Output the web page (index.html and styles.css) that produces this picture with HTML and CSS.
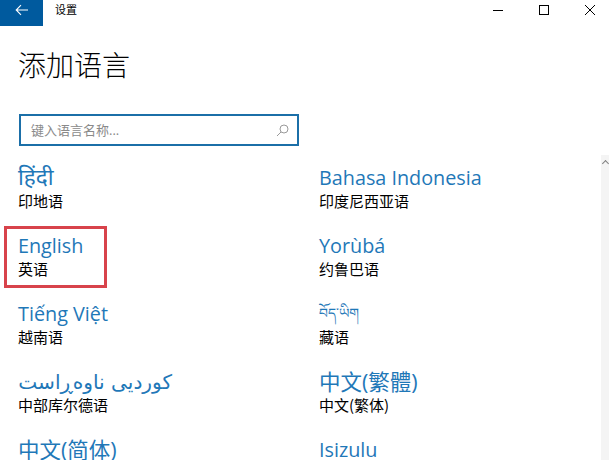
FILE: index.html
```html
<!DOCTYPE html>
<html lang="zh-CN">
<head>
<meta charset="utf-8">
<title>设置</title>
<link rel="stylesheet" href="styles.css">
</head>
<body>
<div class="window">
  <header class="titlebar">
    <div class="titlebar-left">
      <button class="back" aria-label="返回">
        <svg width="14" height="12" viewBox="0 0 14 12"><path d="M13 6H1.5M6 1.2 1.2 6 6 10.8" fill="none" stroke="#fff" stroke-width="1.1"/></svg>
      </button>
      <span class="app-title">设置</span>
    </div>
    <div class="controls">
      <svg width="10" height="10" viewBox="0 0 10 10"><path d="M0 5.5H10" stroke="#000" stroke-width="1"/></svg>
      <svg width="10" height="10" viewBox="0 0 10 10"><rect x=".5" y=".5" width="9" height="9" fill="none" stroke="#000"/></svg>
      <svg width="10" height="10" viewBox="0 0 10 10"><path d="M0 0 10 10M10 0 0 10" stroke="#000" stroke-width="1"/></svg>
    </div>
  </header>
  <main class="content">
    <h1 class="heading">添加语言</h1>
    <div class="search">
      <span class="placeholder">键入语言名称...</span>
      <svg class="search-icon" width="13" height="13" viewBox="0 0 13 13"><circle cx="8" cy="5" r="4" fill="none" stroke="#9a9a9a"/><path d="M5 8 1 12" stroke="#9a9a9a"/></svg>
    </div>
    <div class="languages">
      <div class="lang"><div class="native hindi">हिंदी</div><div class="sub">印地语</div></div>
      <div class="lang"><div class="native">Bahasa Indonesia</div><div class="sub">印度尼西亚语</div></div>
      <div class="lang selected"><div class="native">English</div><div class="sub">英语</div></div>
      <div class="lang"><div class="native">Yorùbá</div><div class="sub">约鲁巴语</div></div>
      <div class="lang"><div class="native">Tiếng Việt</div><div class="sub">越南语</div></div>
      <div class="lang"><div class="native tibetan">བོད་ཡིག</div><div class="sub">藏语</div></div>
      <div class="lang"><div class="native kurdish" dir="rtl">کوردیی ناوەڕاست</div><div class="sub">中部库尔德语</div></div>
      <div class="lang"><div class="native cjk">中文(繁體)</div><div class="sub">中文(繁体)</div></div>
      <div class="lang"><div class="native cjk">中文(简体)</div></div>
      <div class="lang"><div class="native">Isizulu</div></div>
    </div>
  </main>
  <div class="scrollbar"><span class="arrow"></span></div>
</div>
</body>
</html>
```
FILE: styles.css
```css
*, *::after { box-sizing: border-box; }
html, body { margin: 0; height: 100%; overflow: hidden; background: #fff; }
body { font-family: "Open Sans", "Noto Sans CJK SC", sans-serif; color: #000; }
.window { position: relative; width: 609px; height: 460px; overflow: hidden; }
.titlebar { display: flex; justify-content: space-between; height: 26px; }
.titlebar-left { display: flex; align-items: flex-start; }
.back { display: flex; align-items: center; justify-content: center; width: 43px; height: 26px; padding: 0 0 6px; border: 0; background: #005a9e; }
.app-title { margin-left: 12px; font: 11px/18px "Noto Sans CJK SC", sans-serif; }
.controls { display: flex; gap: 36px; padding: 5px 14px 0 0; align-items: flex-start; }
.content { padding: 0 0 0 18px; }
.heading { margin: 15px 0 0; font: 300 28px/46px "Noto Sans CJK SC", sans-serif; }
.search { display: flex; align-items: center; justify-content: space-between; width: 280px; height: 32px; margin: 27px 0 0 1px; padding: 0 8px 0 10px; border: 2px solid #1b6fa8; }
.placeholder { font: 13px/20px "Open Sans", "Noto Sans CJK SC", sans-serif; color: #8a8a8a; }
.search-icon { flex: none; }
.languages { display: grid; grid-template-columns: 301px 1fr; grid-auto-rows: 68px; margin-top: 18px; }
.lang { position: relative; }
.native { height: 28px; font: 400 19.8px/28px "Open Sans", "Noto Sans CJK SC", sans-serif; color: #1f78b8; white-space: nowrap; }
.hindi { margin-top: 2px; height: 26px; font-family: "Noto Sans Devanagari", "Noto Sans", "DejaVu Sans", sans-serif; font-size: 22.5px; }
.tibetan { margin-top: 3px; height: 25px; font-family: "Noto Serif Tibetan", "DejaVu Sans", sans-serif; font-size: 14px; }
.kurdish { width: 154px; font-family: "DejaVu Sans", sans-serif; font-size: 20.1px; text-align: right; }
.cjk { font-size: 21.5px; }
.sub { font: 15px/18px "Noto Sans CJK SC", sans-serif; color: #000; white-space: nowrap; }
.selected::after { content: ""; position: absolute; left: -14px; top: -6px; width: 103px; height: 62px; border: 3px solid #d8434b; }
.scrollbar { position: absolute; right: 0; top: 155px; bottom: 0; width: 8px; background: #f4f4f4; }
.arrow { display: block; width: 5px; height: 5px; margin: 6px auto 0; border-left: 1px solid #808080; border-top: 1px solid #808080; transform: rotate(45deg); }
```
